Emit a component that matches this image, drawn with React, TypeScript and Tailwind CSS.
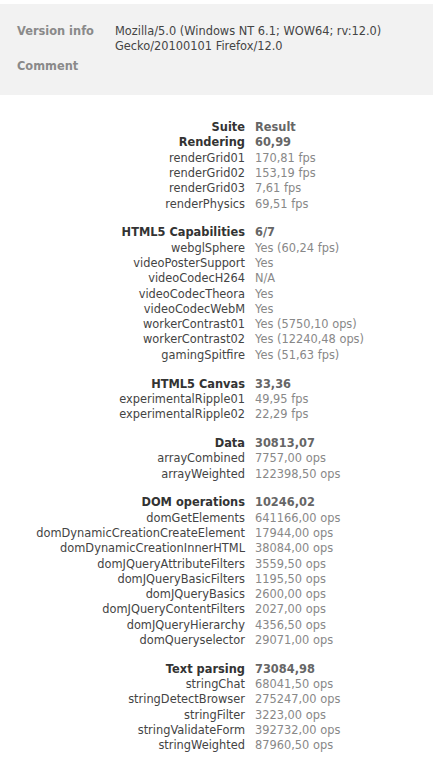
import React from "react";

type Row = { label: string; value: string };
type Section = { title: string; score: string; rows: Row[] };

const sections: Section[] = [
  {
    title: "Rendering",
    score: "60,99",
    rows: [
      { label: "renderGrid01", value: "170,81 fps" },
      { label: "renderGrid02", value: "153,19 fps" },
      { label: "renderGrid03", value: "7,61 fps" },
      { label: "renderPhysics", value: "69,51 fps" },
    ],
  },
  {
    title: "HTML5 Capabilities",
    score: "6/7",
    rows: [
      { label: "webglSphere", value: "Yes (60,24 fps)" },
      { label: "videoPosterSupport", value: "Yes" },
      { label: "videoCodecH264", value: "N/A" },
      { label: "videoCodecTheora", value: "Yes" },
      { label: "videoCodecWebM", value: "Yes" },
      { label: "workerContrast01", value: "Yes (5750,10 ops)" },
      { label: "workerContrast02", value: "Yes (12240,48 ops)" },
      { label: "gamingSpitfire", value: "Yes (51,63 fps)" },
    ],
  },
  {
    title: "HTML5 Canvas",
    score: "33,36",
    rows: [
      { label: "experimentalRipple01", value: "49,95 fps" },
      { label: "experimentalRipple02", value: "22,29 fps" },
    ],
  },
  {
    title: "Data",
    score: "30813,07",
    rows: [
      { label: "arrayCombined", value: "7757,00 ops" },
      { label: "arrayWeighted", value: "122398,50 ops" },
    ],
  },
  {
    title: "DOM operations",
    score: "10246,02",
    rows: [
      { label: "domGetElements", value: "641166,00 ops" },
      { label: "domDynamicCreationCreateElement", value: "17944,00 ops" },
      { label: "domDynamicCreationInnerHTML", value: "38084,00 ops" },
      { label: "domJQueryAttributeFilters", value: "3559,50 ops" },
      { label: "domJQueryBasicFilters", value: "1195,50 ops" },
      { label: "domJQueryBasics", value: "2600,00 ops" },
      { label: "domJQueryContentFilters", value: "2027,00 ops" },
      { label: "domJQueryHierarchy", value: "4356,50 ops" },
      { label: "domQueryselector", value: "29071,00 ops" },
    ],
  },
  {
    title: "Text parsing",
    score: "73084,98",
    rows: [
      { label: "stringChat", value: "68041,50 ops" },
      { label: "stringDetectBrowser", value: "275247,00 ops" },
      { label: "stringFilter", value: "3223,00 ops" },
      { label: "stringValidateForm", value: "392732,00 ops" },
      { label: "stringWeighted", value: "87960,50 ops" },
    ],
  },
];

function Line({
  label,
  value,
  bold,
}: {
  label: string;
  value: string;
  bold?: boolean;
}) {
  return (
    <div className="flex h-[15.3px] items-center whitespace-nowrap">
      <div
        className={`w-[245px] shrink-0 text-right ${
          bold ? "font-bold text-[#333]" : "text-[#444]"
        }`}
      >
        {label}
      </div>
      <div className={`pl-[10px] ${bold ? "font-bold text-[#666]" : "text-[#888]"}`}>
        {value}
      </div>
    </div>
  );
}

export default function App() {
  return (
    <div
      className="min-h-[768px] w-[443px] bg-white text-[11.4px]"
      style={{ fontFamily: "'DejaVu Sans', Verdana, sans-serif" }}
    >
      <div className="h-[4px]" />
      <div className="mr-[10px] bg-[#f2f2f2] px-[17px] pb-[21px] pt-[20px] leading-[15px]">
        <div className="flex">
          <div className="w-[98px] shrink-0 font-bold text-[#8a8a8a]">Version info</div>
          <div className="text-[#444]">
            Mozilla/5.0 (Windows NT 6.1; WOW64; rv:12.0)
            <br />
            Gecko/20100101 Firefox/12.0
          </div>
        </div>
        <div className="mt-[5px] flex">
          <div className="w-[98px] shrink-0 font-bold text-[#8a8a8a]">Comment</div>
        </div>
      </div>
      <div className="pt-[25px]">
        <Line label="Suite" value="Result" bold />
        {sections.map((s, i) => (
          <div key={s.title} className={i === 0 ? "" : "mt-[13.5px]"}>
            <Line label={s.title} value={s.score} bold />
            {s.rows.map((r) => (
              <Line key={r.label} label={r.label} value={r.value} />
            ))}
          </div>
        ))}
      </div>
    </div>
  );
}
